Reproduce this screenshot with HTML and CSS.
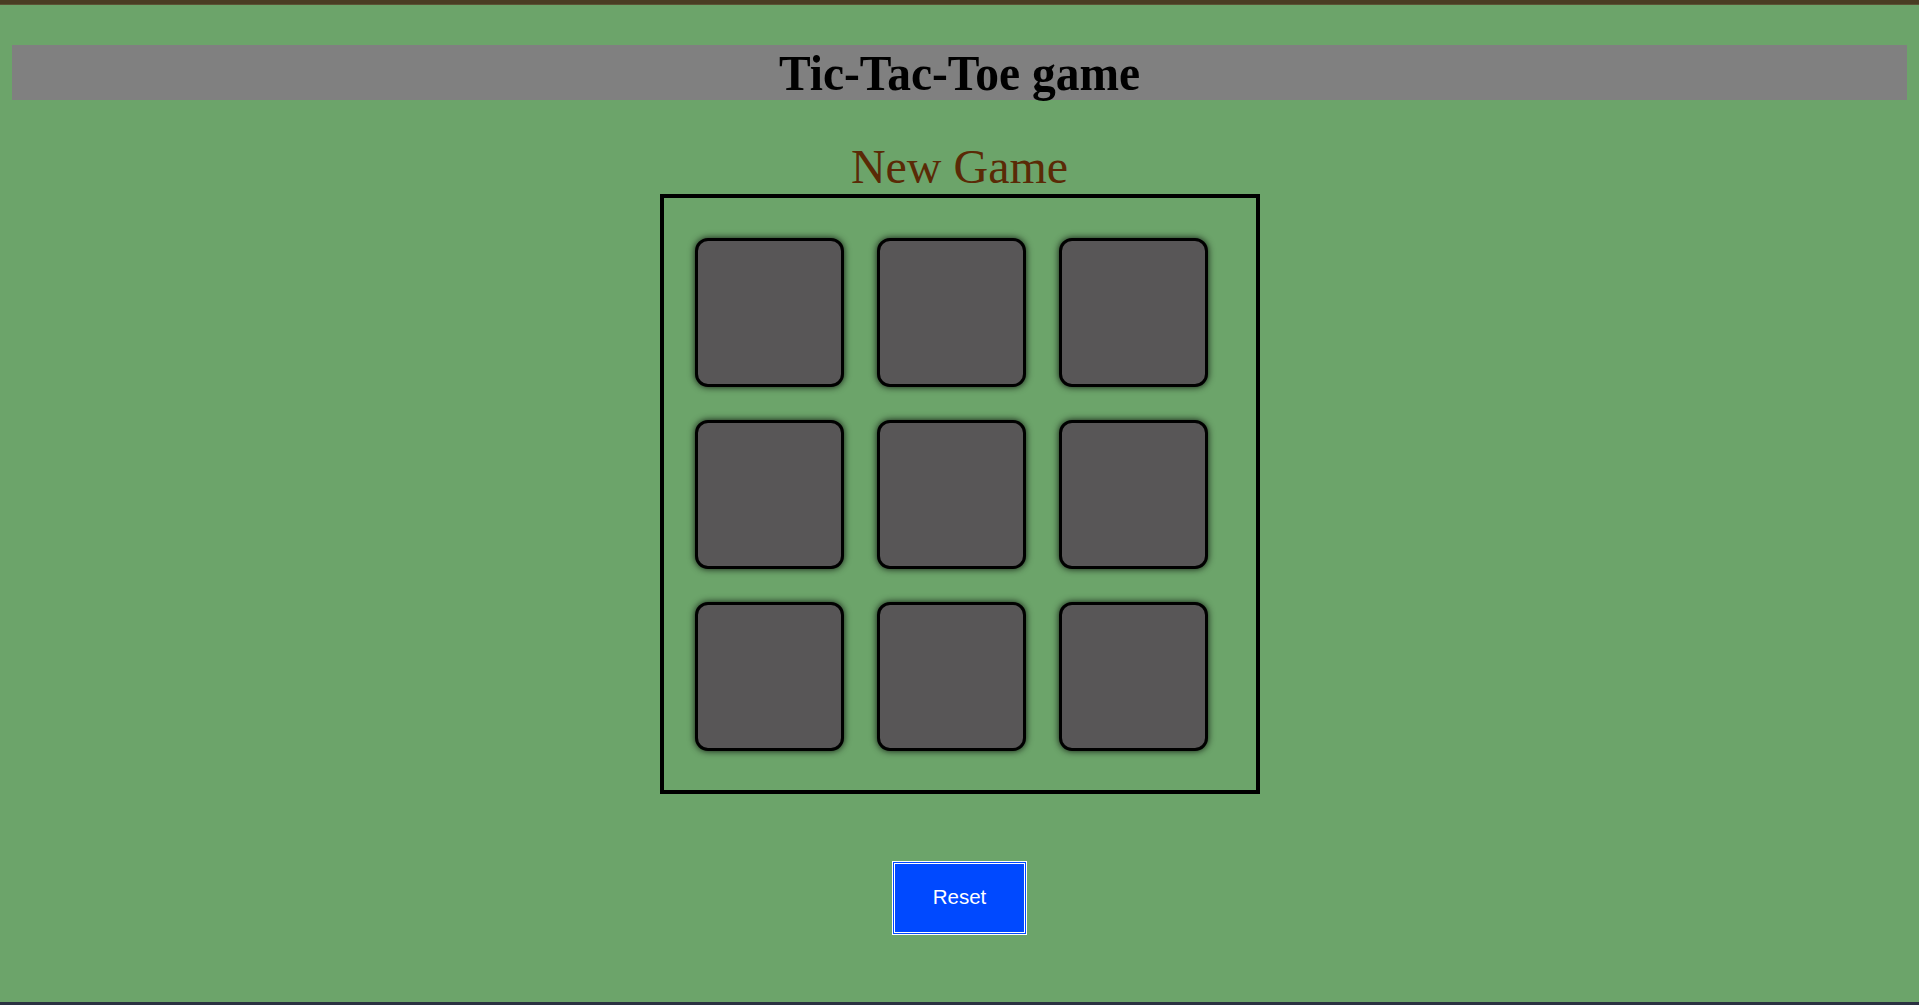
FILE: index.html
```html
<!DOCTYPE html>
<html lang="en">
<head>
<meta charset="utf-8">
<title>Tic-Tac-Toe game</title>
<link rel="stylesheet" href="styles.css">
</head>
<body>
<div class="topbar"></div>
<header class="header">
  <h1 class="title">Tic-Tac-Toe game</h1>
</header>
<main class="main">
  <h2 class="status">New Game</h2>
  <div class="board">
    <div class="grid">
      <button class="cell"></button>
      <button class="cell"></button>
      <button class="cell"></button>
      <button class="cell"></button>
      <button class="cell"></button>
      <button class="cell"></button>
      <button class="cell"></button>
      <button class="cell"></button>
      <button class="cell"></button>
    </div>
  </div>
  <button class="reset">Reset</button>
</main>
<div class="bottombar"></div>
</body>
</html>
```
FILE: styles.css
```css
html, body {
  margin: 0;
  padding: 0;
}
body {
  background: #6ca46a;
  min-height: 100vh;
  font-family: "Liberation Serif", "Times New Roman", serif;
}
.topbar {
  height: 4px;
  background: #4a3d23;
  border-bottom: 1px solid #5b5233;
}
.header {
  margin: 40px 12px 0;
  height: 55px;
  background: #808080;
}
.title {
  margin: 0;
  text-align: center;
  font-size: 47.5px;
  line-height: 57px;
  font-weight: bold;
  color: #000;
  transform: scaleY(1.06);
}
.main {
  display: flex;
  flex-direction: column;
  align-items: center;
}
.status {
  margin: 39px 0 0;
  font-size: 48px;
  line-height: 55px;
  font-weight: normal;
  color: #5a2a06;
}
.board {
  box-sizing: border-box;
  width: 600px;
  height: 600px;
  border: 4px solid #000;
  padding: 40px 0 0 31px;
}
.grid {
  display: grid;
  grid-template-columns: repeat(3, 149px);
  grid-auto-rows: 149px;
  column-gap: 33px;
  row-gap: 33px;
}
.cell {
  box-sizing: border-box;
  width: 149px;
  height: 149px;
  margin: 0;
  padding: 0;
  background: #585657;
  border: 3px solid #000;
  border-radius: 13px;
  box-shadow: 0 0 7px rgba(0, 0, 0, 0.85);
}
.reset {
  box-sizing: border-box;
  margin-top: 67px;
  width: 135px;
  height: 74px;
  background: #0049ff;
  border: 3px double #fff;
  color: #fff;
  font-family: "Liberation Sans", Arial, sans-serif;
  font-size: 20.5px;
  padding: 0 0 2px;
}
.bottombar {
  position: fixed;
  left: 0;
  right: 0;
  bottom: 0;
  height: 3px;
  background: #2b3142;
}
```
